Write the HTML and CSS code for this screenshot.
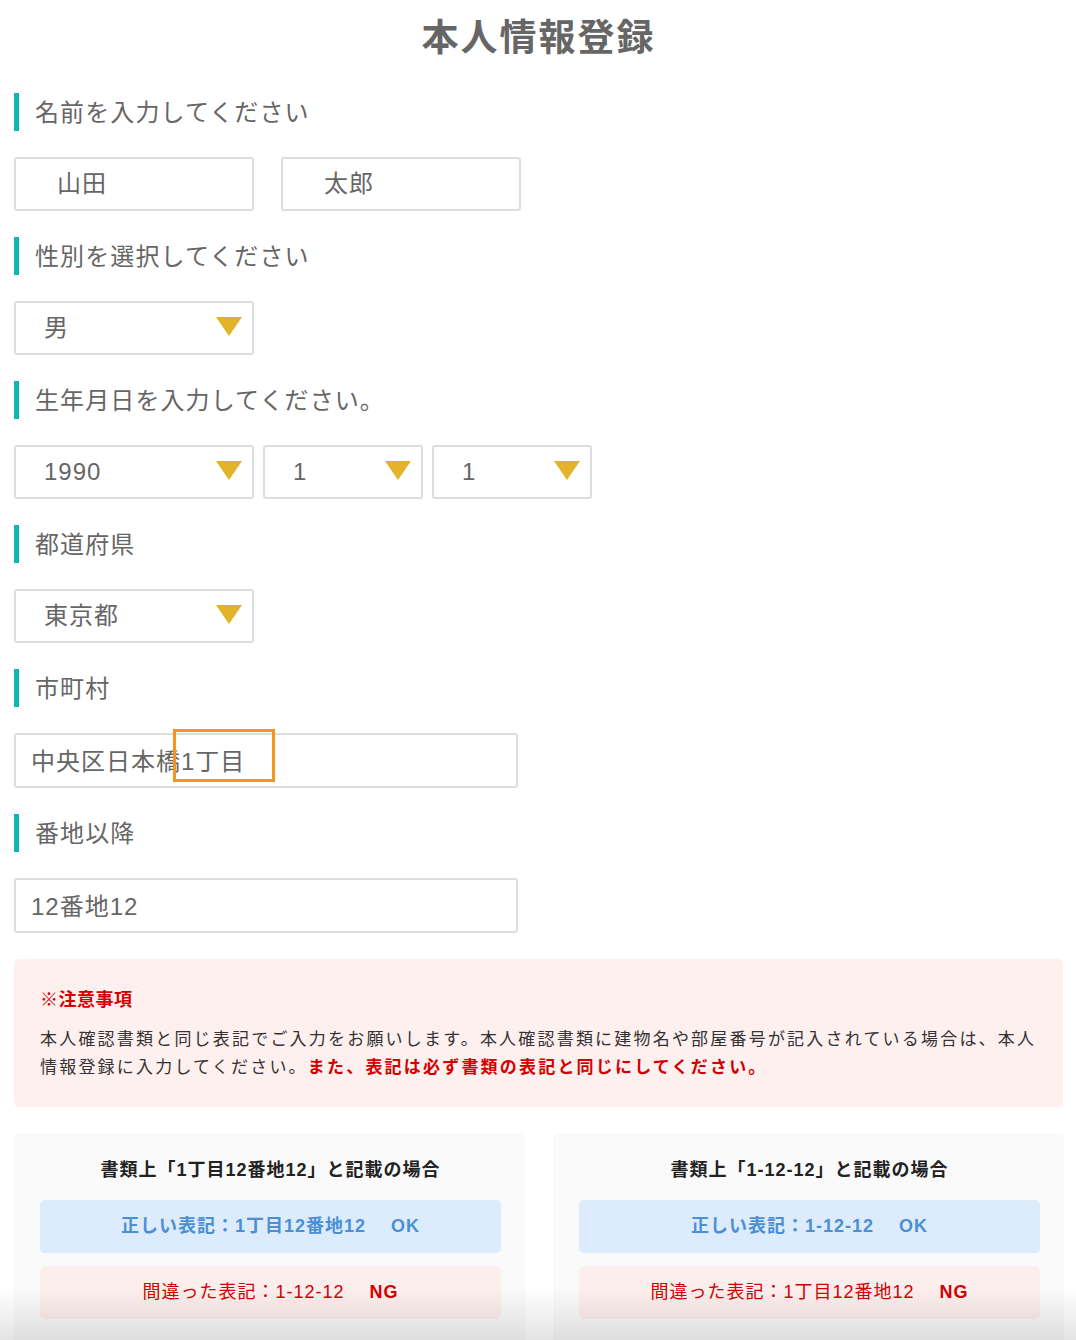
FILE: index.html
```html
<!DOCTYPE html>
<html lang="ja">
<head>
<meta charset="utf-8">
<title>本人情報登録</title>
<link rel="stylesheet" href="styles.css">
</head>
<body>
<div class="page">
  <h1 class="title">本人情報登録</h1>
  <div class="form">
    <div class="label">名前を入力してください</div>
    <div class="row gap-wide">
      <div class="field name">山田</div>
      <div class="field name">太郎</div>
    </div>

    <div class="label">性別を選択してください</div>
    <div class="row">
      <div class="field select w240">男<span class="arrow"></span></div>
    </div>

    <div class="label">生年月日を入力してください。</div>
    <div class="row gap-narrow">
      <div class="field select w240">1990<span class="arrow"></span></div>
      <div class="field select w160">1<span class="arrow"></span></div>
      <div class="field select w160">1<span class="arrow"></span></div>
    </div>

    <div class="label">都道府県</div>
    <div class="row">
      <div class="field select w240">東京都<span class="arrow"></span></div>
    </div>

    <div class="label">市町村</div>
    <div class="row">
      <div class="field text wide">中央区日本橋1丁目<span class="highlight"></span></div>
    </div>

    <div class="label">番地以降</div>
    <div class="row">
      <div class="field text wide">12番地12</div>
    </div>

    <div class="notice">
      <p class="notice-title">※注意事項</p>
      <p class="notice-body">本人確認書類と同じ表記でご入力をお願いします。本人確認書類に建物名や部屋番号が記入されている場合は、本人情報登録に入力してください。<strong class="notice-strong">また、表記は必ず書類の表記と同じにしてください。</strong></p>
    </div>

    <div class="cards">
      <div class="card">
        <p class="card-title">書類上「1丁目12番地12」と記載の場合</p>
        <div class="ok">正しい表記：1丁目12番地12<span class="mark">OK</span></div>
        <div class="ng">間違った表記：1-12-12<span class="mark">NG</span></div>
      </div>
      <div class="card">
        <p class="card-title">書類上「1-12-12」と記載の場合</p>
        <div class="ok">正しい表記：1-12-12<span class="mark">OK</span></div>
        <div class="ng">間違った表記：1丁目12番地12<span class="mark">NG</span></div>
      </div>
    </div>
  </div>
</div>
<div class="fade"></div>
</body>
</html>
```

FILE: styles.css
```css
* { box-sizing: border-box; }

html, body {
  margin: 0;
  padding: 0;
  background: #ffffff;
}

body {
  font-family: "Liberation Sans", "Noto Sans CJK JP", sans-serif;
  color: #666666;
}

.page {
  width: 1076px;
  padding: 12px 13px 0 14px;
}

.title {
  margin: 0;
  height: 54px;
  line-height: 54px;
  text-align: center;
  font-size: 37px;
  font-weight: bold;
  letter-spacing: 2px;
  color: #666666;
}

.form {
  margin-top: 27px;
  display: flex;
  flex-direction: column;
  gap: 26px;
}

.label {
  height: 38px;
  line-height: 40px;
  border-left: 5px solid #10b5b5;
  padding-left: 16px;
  font-size: 24px;
  letter-spacing: 1.1px;
  color: #666666;
}

.row {
  display: flex;
}

.gap-wide { gap: 27px; }
.gap-narrow { gap: 9px; }

.field {
  position: relative;
  height: 54px;
  line-height: 50px;
  border: 2px solid #dddddd;
  border-radius: 3px;
  background: #ffffff;
  font-size: 24px;
  letter-spacing: 1px;
  color: #666666;
}

.name {
  width: 240px;
  padding-left: 41px;
}

.select {
  padding-left: 28px;
}

.w240 { width: 240px; }
.w160 { width: 160px; }

.arrow {
  position: absolute;
  right: 10px;
  top: 14px;
  width: 0;
  height: 0;
  border-left: 13px solid transparent;
  border-right: 13px solid transparent;
  border-top: 19px solid #e3b42b;
}

.text.wide {
  width: 504px;
  height: 55px;
  line-height: 53px;
  padding-left: 15px;
}

.highlight {
  position: absolute;
  left: 157px;
  top: -6px;
  width: 102px;
  height: 53px;
  border: 3px solid #f8931f;
}

.notice {
  background: #fff0f0;
  border-radius: 5px;
  padding: 25px 26px 27px 26px;
}

.notice-title {
  margin: 0 0 12px 0;
  font-size: 18px;
  line-height: 28px;
  letter-spacing: 0.5px;
  font-weight: bold;
  color: #d40000;
  font-family: "Noto Sans CJK JP", sans-serif;
}

.notice-body {
  margin: 0;
  font-size: 17px;
  line-height: 28px;
  letter-spacing: 2.2px;
  color: #333333;
  font-family: "Noto Sans CJK JP", sans-serif;
}

.notice-strong {
  color: #d40000;
  font-weight: bold;
}

.cards {
  display: grid;
  grid-template-columns: 511px 511px;
  gap: 28px;
}

.card {
  background: #fafafa;
  border-radius: 5px;
  padding: 23px 24px 26px 26px;
  display: flex;
  flex-direction: column;
  gap: 13px;
}

.card-title {
  margin: 0 0 3px 0;
  text-align: center;
  font-size: 18px;
  line-height: 28px;
  letter-spacing: 1px;
  font-weight: bold;
  color: #222222;
}

.ok, .ng {
  height: 53px;
  line-height: 53px;
  border-radius: 5px;
  text-align: center;
  font-size: 18px;
  letter-spacing: 1px;
}

.ok {
  background: #dcecfc;
  color: #4b8fd5;
  font-weight: bold;
}

.ng {
  background: #fdeeee;
  color: #d40000;
}

.mark {
  margin-left: 25px;
  font-weight: bold;
}

.fade {
  position: fixed;
  left: 0;
  right: 0;
  bottom: 0;
  height: 52px;
  pointer-events: none;
  background: linear-gradient(to bottom, rgba(0, 0, 0, 0), rgba(0, 0, 0, 0.11));
}
```
